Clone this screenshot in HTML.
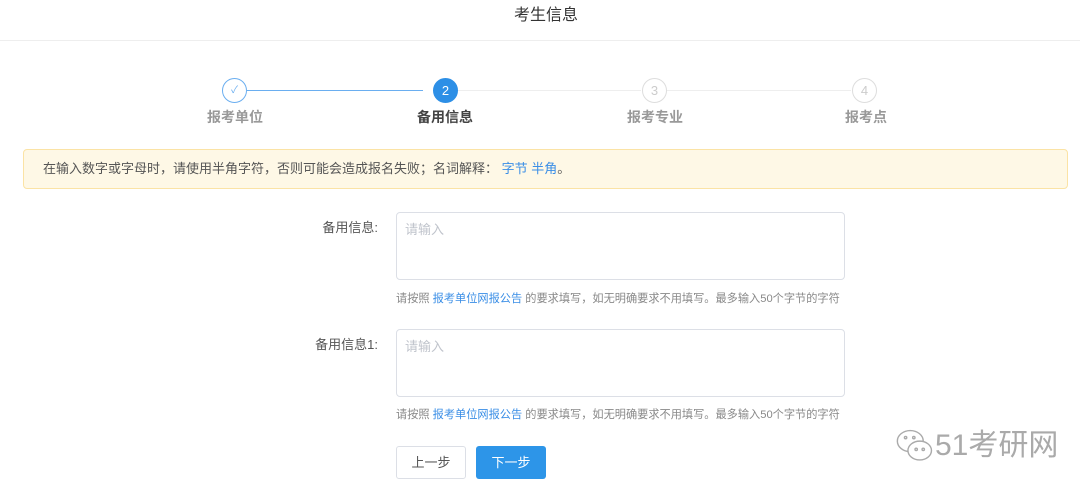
<!DOCTYPE html><html><head><meta charset="utf-8"><style>
*{margin:0;padding:0;box-sizing:border-box}
body{width:1080px;height:489px;background:#fff;font-family:"Liberation Sans","Noto Sans CJK SC",sans-serif;position:relative;overflow:hidden;color:#333}
.a{position:absolute}
.c{width:25px;height:25px;border-radius:50%;border:1px solid #ddd;color:#ccc;font-size:13px;text-align:center;line-height:23px;background:#fff}
.sl{font-size:14px;font-weight:bold;color:#999;width:100px;text-align:center;top:107px}
.ta{border:1px solid #dcdfe6;border-radius:4px;width:449px;height:68px;left:396px;font-size:13px;color:#c0c4cc;padding:6px 8px}
.lb{font-size:13px;color:#555;width:120px;text-align:right;left:258px}
.h{font-size:11.2px;color:#888;left:396px}
.h span{color:#3a8ee6}
.b{height:33px;width:70px;border-radius:3px;font-size:13px;text-align:center;line-height:31px;top:446px}
</style></head><body>
<div class="a" style="left:0;top:1px;width:1092px;text-align:center;font-size:16px;color:#333">考生信息</div>
<div class="a" style="left:0;top:40px;width:1080px;height:1px;background:#eee"></div>
<div class="a" style="left:247px;top:90px;width:176px;height:1px;background:#6aaef0"></div>
<div class="a" style="left:458px;top:90px;width:183px;height:1px;background:#eee"></div>
<div class="a" style="left:667px;top:90px;width:184px;height:1px;background:#eee"></div>
<div class="a c" style="left:222px;top:78px;border-color:#6aaef0;color:#6aaef0;font-size:10px">✓</div>
<div class="a c" style="left:433px;top:78px;border-color:#2d8fe6;background:#2d8fe6;color:#fff">2</div>
<div class="a c" style="left:642px;top:78px">3</div>
<div class="a c" style="left:852px;top:78px">4</div>
<div class="a sl" style="left:185px">报考单位</div>
<div class="a sl" style="left:395px;color:#444">备用信息</div>
<div class="a sl" style="left:605px">报考专业</div>
<div class="a sl" style="left:816px">报考点</div>
<div class="a" style="left:23px;top:149px;width:1045px;height:40px;background:#fef8e6;border:1px solid #fbe3a5;border-radius:4px;font-size:13px;color:#555;line-height:38px;padding-left:19px">在输入数字或字母时，请使用半角字符，否则可能会造成报名失败；名词解释： <span style="color:#3a8ee6">字节 半角</span>。</div>
<div class="a lb" style="top:217px">备用信息:</div>
<div class="a ta" style="top:212px">请输入</div>
<div class="a h" style="top:290px">请按照 <span>报考单位网报公告</span> 的要求填写，如无明确要求不用填写。最多输入50个字节的字符</div>
<div class="a lb" style="top:334px">备用信息1:</div>
<div class="a ta" style="top:329px">请输入</div>
<div class="a h" style="top:406px">请按照 <span>报考单位网报公告</span> 的要求填写，如无明确要求不用填写。最多输入50个字节的字符</div>
<div class="a b" style="left:396px;border:1px solid #dcdfe6;color:#555">上一步</div>
<div class="a b" style="left:476px;background:#2d95e8;color:#fff;line-height:33px">下一步</div>
<div class="a" style="left:895px;top:420px;font-size:30px;color:#aaa;white-space:nowrap">
<svg width="40" height="40" viewBox="0 0 34 34" style="vertical-align:middle" fill="none" stroke="#aaa" stroke-width="1.2"><ellipse cx="13" cy="12" rx="11" ry="9"/><ellipse cx="21" cy="20" rx="10" ry="8" fill="#fff"/><circle cx="9" cy="9" r="1"/><circle cx="16" cy="9" r="1"/><circle cx="18" cy="19" r="1"/><circle cx="24" cy="19" r="1"/></svg>51考研网</div>
</body></html>
